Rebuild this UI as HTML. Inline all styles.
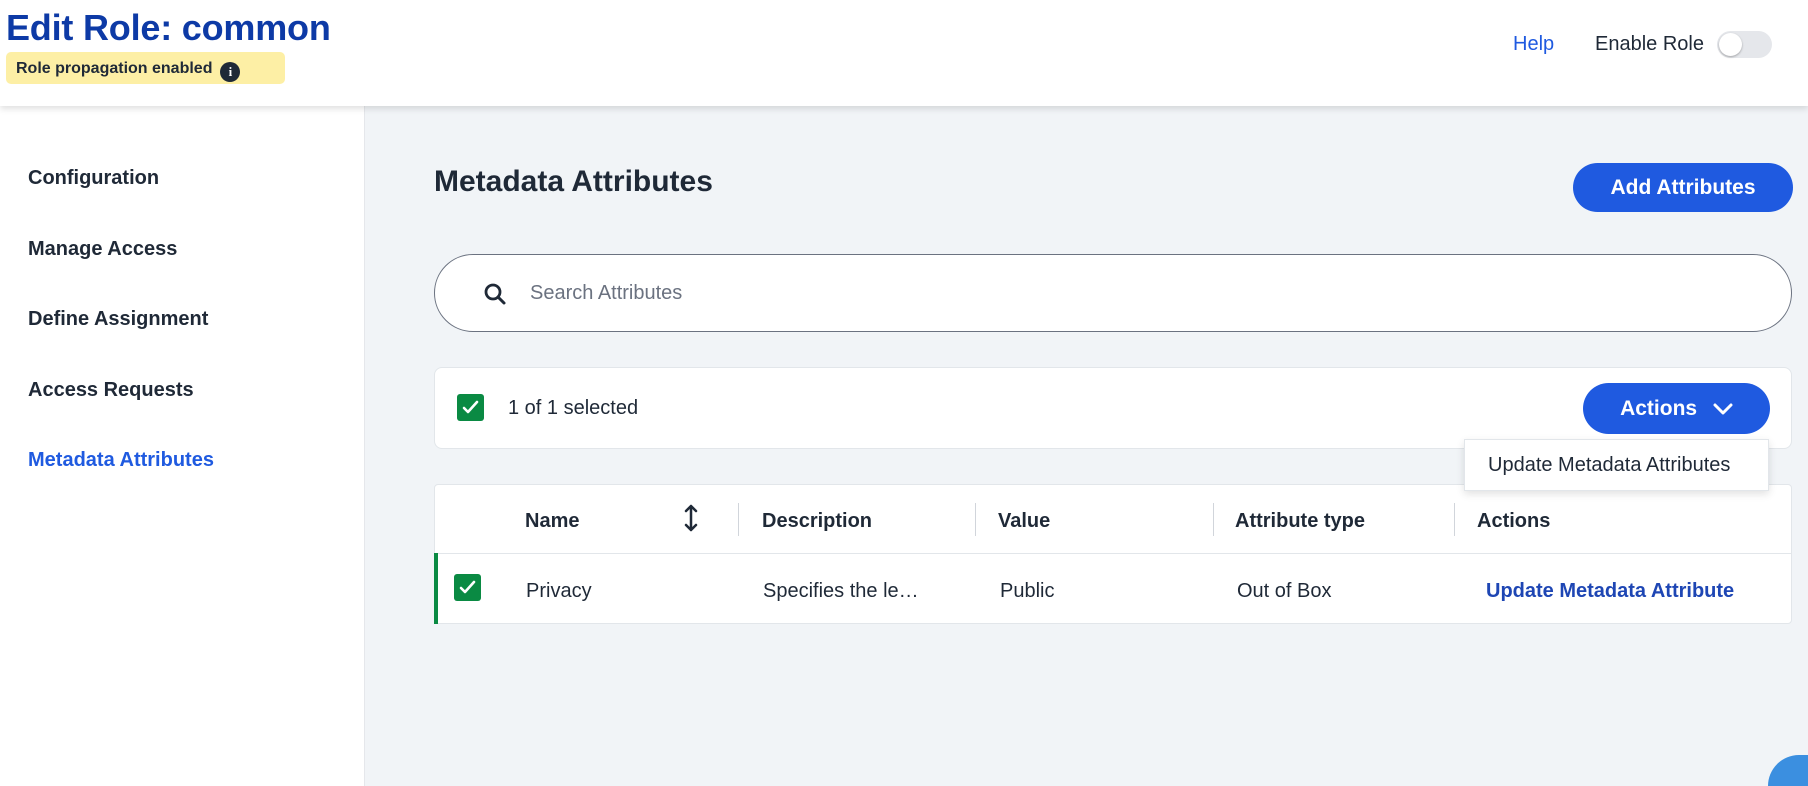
<!DOCTYPE html>
<html><head><meta charset="utf-8">
<style>
*{box-sizing:border-box;margin:0;padding:0}
html{width:1808px;height:786px;overflow:hidden}
body{width:1808px;height:786px;overflow:hidden;font-family:"Liberation Sans",sans-serif;background:#f1f4f7;position:relative;color:#1f2937}
.abs{position:absolute}
.header{left:0;top:0;width:1808px;height:106px;background:#fff;box-shadow:0 3px 6px rgba(0,0,0,.12);z-index:2}
.title{left:6px;top:7px;font-size:36px;font-weight:bold;color:#0d3aa6;letter-spacing:-0.2px}
.badge{left:6px;top:52px;width:279px;height:32px;background:#fdefa5;border-radius:5px;font-size:16px;font-weight:bold;color:#1f2937;padding:8px 0 0 10px}
.info{display:inline-block;width:20px;height:20px;border-radius:50%;background:#1f2937;color:#fff;font-size:13px;text-align:center;line-height:20px;margin-left:8px;vertical-align:-3px;font-family:"Liberation Serif",serif;font-weight:bold}
.help{left:1513px;top:33px;font-size:20px;color:#1f5ae0}
.enable{left:1595px;top:33px;font-size:20px;color:#1f2937}
.tog{left:1717px;top:31px;width:55px;height:27px;border-radius:14px;background:#e5e7eb}
.tog::after{content:"";position:absolute;left:2px;top:2px;width:23px;height:23px;border-radius:50%;background:#fff;box-shadow:0 1px 2px rgba(0,0,0,.3)}
.side{left:0;top:106px;width:365px;height:680px;background:#fff;border-right:1px solid #e5e7eb}
.nav{left:28px;font-size:20px;font-weight:bold;color:#1f2937}
h1{position:absolute;left:434px;top:165px;font-size:30px;color:#1f2937}
.btn{background:#1f5ae0;color:#fff;font-weight:bold;font-size:21px;border-radius:26px;text-align:center}
.search{left:434px;top:254px;width:1358px;height:78px;background:#fff;border:1px solid #6b7280;border-radius:39px}
.card{background:#fff;border:1px solid #e2e6ea;border-radius:8px}
.cb{width:27px;height:27px;background:#0a8a43;border-radius:3px}
.cb svg{position:absolute;left:5px;top:6px}
.th{top:510px;font-size:20px;font-weight:bold;color:#1f2937}
.td{top:580px;font-size:20px;color:#1f2937}
.div{top:503px;width:1px;height:33px;background:#d1d5db}
</style></head><body>
<div class="abs header">
<div class="abs title">Edit Role: common</div>
<div class="abs badge">Role propagation enabled<span class="info">i</span></div>
<div class="abs help">Help</div>
<div class="abs enable">Enable Role</div>
<div class="abs tog"></div>
</div>
<div class="abs side">
<div class="abs nav" style="top:61px">Configuration</div>
<div class="abs nav" style="top:132px">Manage Access</div>
<div class="abs nav" style="top:202px">Define Assignment</div>
<div class="abs nav" style="top:273px">Access Requests</div>
<div class="abs nav" style="top:343px;color:#1f5ae0">Metadata Attributes</div>
</div>
<h1>Metadata Attributes</h1>
<div class="abs btn" style="left:1573px;top:163px;width:220px;height:49px;line-height:49px">Add Attributes</div>
<div class="abs search">
<svg class="abs" style="left:48px;top:27px" width="24" height="24" viewBox="0 0 24 24"><circle cx="10" cy="10" r="7" fill="none" stroke="#1f2937" stroke-width="2.8"/><path d="M15 15l6 6" stroke="#1f2937" stroke-width="3" stroke-linecap="round"/></svg>
<div class="abs" style="left:95px;top:27px;font-size:20px;color:#6b7280">Search Attributes</div>
</div>
<div class="abs card" style="left:434px;top:367px;width:1358px;height:82px"></div>
<div class="abs cb" style="left:457px;top:394px"><svg width="17" height="15" viewBox="0 0 17 15"><path d="M2 8l4 4 9-10" fill="none" stroke="#fff" stroke-width="2.6" stroke-linecap="round" stroke-linejoin="round"/></svg></div>
<div class="abs" style="left:508px;top:397px;font-size:20px;color:#1f2937">1 of 1 selected</div>
<div class="abs btn" style="left:1583px;top:383px;width:187px;height:51px;line-height:51px">Actions
<svg style="vertical-align:0;margin-left:10px" width="20" height="12" viewBox="0 0 20 12"><path d="M2 2l8 8 8-8" fill="none" stroke="#fff" stroke-width="3" stroke-linecap="round" stroke-linejoin="round"/></svg></div>
<div class="abs card" style="left:434px;top:484px;width:1358px;height:140px;border-radius:4px"></div>
<div class="abs" style="left:434px;top:553px;width:1358px;height:1px;background:#e2e6ea"></div>
<div class="abs" style="left:434px;top:553px;width:4px;height:71px;background:#0a8a43"></div>
<div class="abs th" style="left:525px">Name</div>
<svg class="abs" style="left:683px;top:503px" width="16" height="30" viewBox="0 0 16 30"><path d="M8 3v24M3 8l5-5 5 5M3 22l5 5 5-5" fill="none" stroke="#1f2937" stroke-width="2.5" stroke-linecap="round" stroke-linejoin="round"/></svg>
<div class="abs div" style="left:738px"></div>
<div class="abs th" style="left:762px">Description</div>
<div class="abs div" style="left:975px"></div>
<div class="abs th" style="left:998px">Value</div>
<div class="abs div" style="left:1213px"></div>
<div class="abs th" style="left:1235px">Attribute type</div>
<div class="abs div" style="left:1454px"></div>
<div class="abs th" style="left:1477px">Actions</div>
<div class="abs cb" style="left:454px;top:574px"><svg width="17" height="15" viewBox="0 0 17 15"><path d="M2 8l4 4 9-10" fill="none" stroke="#fff" stroke-width="2.6" stroke-linecap="round" stroke-linejoin="round"/></svg></div>
<div class="abs td" style="left:526px">Privacy</div>
<div class="abs td" style="left:763px">Specifies the le…</div>
<div class="abs td" style="left:1000px">Public</div>
<div class="abs td" style="left:1237px">Out of Box</div>
<div class="abs td" style="left:1486px;font-weight:bold;color:#1e46b4">Update Metadata Attribute</div>
<div class="abs" style="left:1464px;top:439px;width:305px;height:52px;background:#fff;border:1px solid #e2e6ea;box-shadow:0 3px 8px rgba(0,0,0,.12);font-size:20px;color:#1f2937;padding:14px 0 0 23px">Update Metadata Attributes</div>
<div class="abs" style="left:1768px;top:755px;width:40px;height:31px;background:#3b8fe0;border-top-left-radius:40px 40px"></div>
</body></html>
